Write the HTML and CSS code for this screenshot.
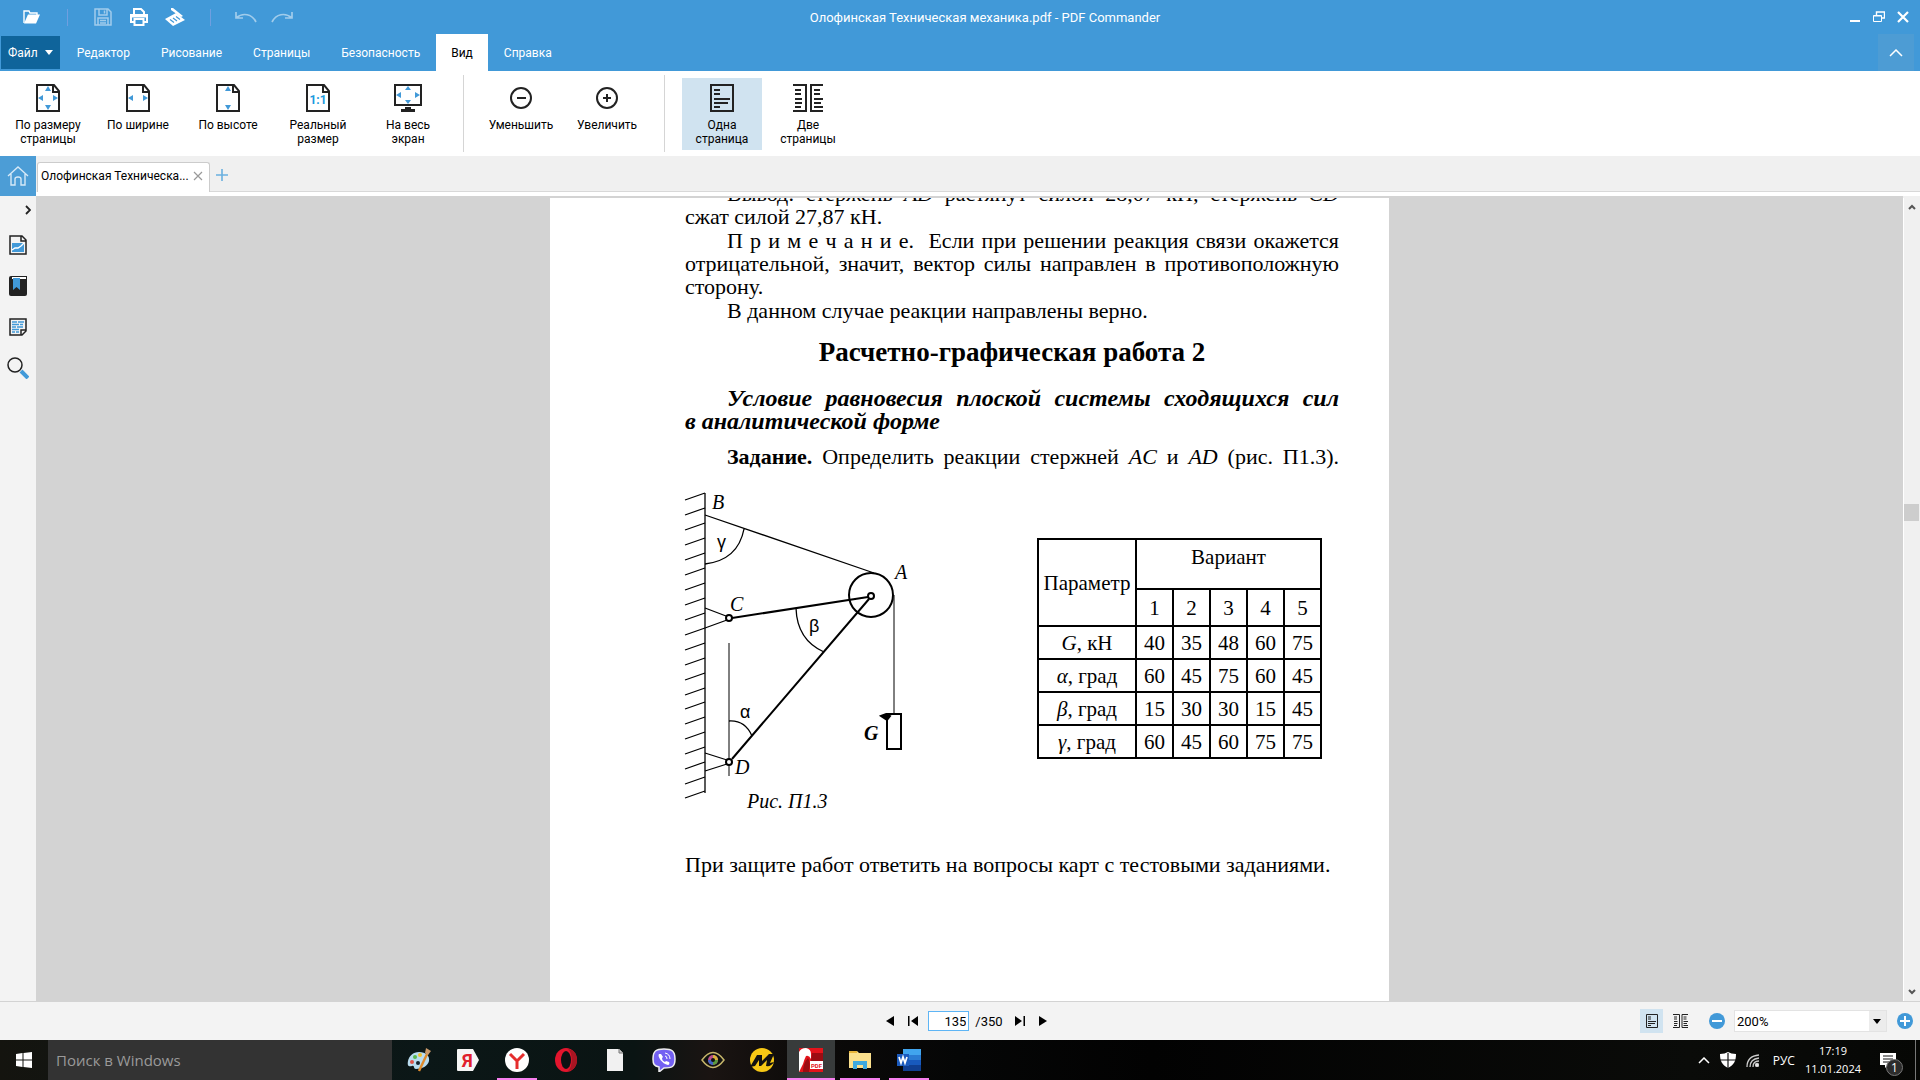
FILE: index.html
```html
<!DOCTYPE html>
<html lang="ru">
<head>
  <meta charset="UTF-8" />
  <meta name="viewport" content="width=device-width, initial-scale=1.0"/>
  <title>Олофинская Техническая механика.pdf - PDF Commander</title>
  <link rel="stylesheet" href="styles.css">
</head>
<body>
  <header class="titlebar">
    <div class="quick">
      <button class="quick-btn" aria-label="Открыть"><svg width="18" height="16" viewBox="0 0 18 16"><path d="M1 14V2h5l1 2h7v2" fill="none" stroke="#fff" stroke-width="1.4"/><path d="M1 14.500L5 5.500H17L13 14.500Z" fill="#fff"/></svg></button>
      <span class="quick-sep"></span>
      <button class="quick-btn faded" aria-label="Сохранить"><svg width="18" height="18" viewBox="0 0 18 18" fill="none" stroke="#fff" stroke-width="1.500"><path d="M1 1h13l3 3v13H1z"/><path d="M5 1v6h8V1M10.500 2.500v3M4 17v-7h10v7M6 12.500h6M6 15h6"/></svg></button>
      <button class="quick-btn" aria-label="Печать"><svg width="18" height="18" viewBox="0 0 18 18" fill="none" stroke="#fff" stroke-width="2"><path d="M4 7V1h7l3 3v3"/><path d="M4 14H1V7h16v7h-3"/><path d="M4.500 11h9v6h-9z"/><path d="M1 8.500h16"/></svg></button>
      <button class="quick-btn" aria-label="Сканировать"><svg width="20" height="18" viewBox="0 0 20 18"><path d="M6 0L8 0L18 8L16 9L6 2Z" fill="#fff"/><path d="M0 11L11 5L20 12L8 18Z" fill="#fff"/><path d="M5 11.500l4 3M8 10l4 3M11 8.500l4 3" stroke="#4199d8" stroke-width="1.200"/></svg></button>
      <span class="quick-sep"></span>
      <button class="quick-btn wide faded" aria-label="Отменить"><svg width="22" height="12" viewBox="0 0 22 12" fill="none" stroke="#fff" stroke-width="1.700"><path d="M1 1v6h7M1 7C8 1 17 3 21 11"/></svg></button>
      <button class="quick-btn wide faded" aria-label="Повторить"><svg width="22" height="12" viewBox="0 0 22 12" fill="none" stroke="#fff" stroke-width="1.700"><path d="M21 1v6h-7M21 7C14 1 5 3 1 11"/></svg></button>
    </div>
    <div class="title">Олофинская Техническая механика.pdf - PDF Commander</div>
    <div class="window-btns">
      <button aria-label="Свернуть"><svg width="12" height="12" viewBox="0 0 12 12"><path d="M1 10h10" stroke="#fff" stroke-width="2"/></svg></button>
      <button aria-label="Восстановить"><svg width="12" height="12" viewBox="0 0 12 12" fill="none" stroke="#fff"><path d="M3.500 4V1h8v6H9" stroke-width="1.400"/><path d="M.500 4.500h8v6h-8zM.500 5h8"/></svg></button>
      <button aria-label="Закрыть"><svg width="12" height="12" viewBox="0 0 12 12"><path d="M1 1l10 10M11 1L1 11" stroke="#fff" stroke-width="2.200"/></svg></button>
    </div>
  </header>

  <nav class="menu">
    <button class="file">Файл <svg width="8" height="5" viewBox="0 0 8 5"><path d="M0 0h8L4 5z" fill="#fff"/></svg></button>
    <button>Редактор</button>
    <button>Рисование</button>
    <button>Страницы</button>
    <button>Безопасность</button>
    <button class="active">Вид</button>
    <button>Справка</button>
    <button class="collapse" aria-label="Свернуть ленту"><svg width="14" height="8" viewBox="0 0 14 8"><path d="M1 7l6-6 6 6" fill="none" stroke="#fff" stroke-width="1.500"/></svg></button>
  </nav>

  <div class="ribbon">
    <div class="group zoom-modes">
      <button>
        <svg width="24" height="28" viewBox="0 0 24 28"><path d="M1 1h17l5 6v20H1zM17 1v7h6" class="ink"/><path d="M12 2l3 5H9zM12 26l3-5H9zM2 14l5-3v6zM22 14l-5-3v6z" class="sky"/></svg>
        По размеру<br>страницы
      </button>
      <button>
        <svg width="24" height="28" viewBox="0 0 24 28"><path d="M1 1h17l5 6v20H1zM17 1v7h6" class="ink"/><path d="M2 14l5-3v6zM22 14l-5-3v6z" class="sky"/></svg>
        По ширине
      </button>
      <button>
        <svg width="24" height="28" viewBox="0 0 24 28"><path d="M1 1h17l5 6v20H1zM17 1v7h6" class="ink"/><path d="M12 2l3 5H9zM12 26l3-5H9z" class="sky"/></svg>
        По высоте
      </button>
      <button>
        <svg width="24" height="28" viewBox="0 0 24 28"><path d="M1 1h17l5 6v20H1zM17 1v7h6" class="ink"/><text x="12" y="20" class="ratio">1:1</text></svg>
        Реальный<br>размер
      </button>
      <button>
        <svg width="28" height="28" viewBox="0 0 28 28"><path d="M1 1h26v20H1z" class="ink"/><path d="M11 23h6v2h4v3H7v-3h4z" fill="#222"/><path d="M14 2l3 4h-6zM14 20l3-4h-6zM2 11l5-3v6zM26 11l-5-3v6z" class="sky"/></svg>
        На весь<br>экран
      </button>
    </div>
    <div class="group">
      <button>
        <svg width="24" height="28" viewBox="0 0 24 28"><circle cx="12" cy="14" r="10" class="ink"/><path d="M8 14h9" class="ink"/></svg>
        Уменьшить
      </button>
      <button>
        <svg width="24" height="28" viewBox="0 0 24 28"><circle cx="12" cy="14" r="10" class="ink"/><path d="M8 14h8M12 10v8" class="ink"/></svg>
        Увеличить
      </button>
    </div>
    <div class="group">
      <button class="selected">
        <svg width="24" height="28" viewBox="0 0 24 28"><path d="M1 1h22v26H1zM4 6h6M4 10h6M4 15h16M4 19h14M4 23h6" class="ink"/></svg>
        Одна<br>страница
      </button>
      <button>
        <svg width="30" height="28" viewBox="0 0 30 28"><path d="M0 1h13v26H0M30 1H18v26h12M2 6h6M2 10h6M2 15h7M2 19h7M2 23h6M21 6h6M21 10h6M21 15h9M21 19h7M21 23h9" class="ink"/></svg>
        Две<br>страницы
      </button>
    </div>
  </div>

  <div class="tabs">
    <button class="home" aria-label="Домой"><svg width="22" height="20" viewBox="0 0 22 20" fill="none" stroke="#d6e9f7" stroke-width="1.400"><path d="M1 10L11 1l10 9M4 8v11h4v-6q0-2 3-2t3 2v6h4V8"/></svg></button>
    <div class="tab">
      <span>Олофинская Техническа...</span>
      <button aria-label="Закрыть вкладку"><svg width="10" height="10" viewBox="0 0 10 10"><path d="M1 1l8 8M9 1L1 9" stroke="#999" stroke-width="1.200"/></svg></button>
    </div>
    <button class="add" aria-label="Новая вкладка"><svg width="12" height="12" viewBox="0 0 12 12"><path d="M0 6h12M6 0v12" stroke="#6ab0df" stroke-width="1.600"/></svg></button>
  </div>

  <div class="workspace">
    <aside class="sidebar">
      <button class="expand" aria-label="Развернуть панель"><svg width="6" height="10" viewBox="0 0 6 10"><path d="M1 1l4 4-4 4" fill="none" stroke="#222" stroke-width="1.800"/></svg></button>
      <button aria-label="Эскизы"><svg width="18" height="20" viewBox="0 0 18 20"><path d="M1 1h12l4 4v14H1zM12 1v5h5" class="thin"/><path d="M3 8h12v9H3z" class="sky"/><path d="M3 15l3-2 3 0 3-2 3-3" fill="none" stroke="#fff" stroke-width="1.400"/></svg></button>
      <button aria-label="Закладки"><svg width="18" height="20" viewBox="0 0 18 20"><path d="M0 2q0-2 2-2h16v18q0 2-2 2H2q-2 0-2-2z" fill="#222"/><path d="M3 1h14v2H3z" fill="#fff"/><path d="M4 2h7v12l-3.500-3L4 14z" class="sky"/></svg></button>
      <button aria-label="Комментарии"><svg width="18" height="18" viewBox="0 0 18 18"><path d="M1 1h16v12l-4 4H1zM17 12h-5v5" class="thin"/><path d="M3 4h5M9 4h6M3 6.500h7M11 6.500h3M3 9h4M8 9h6M3 11.500h7M3 14h3M7 14h3" fill="none" stroke="#4199d8" stroke-width="1.300"/></svg></button>
      <button aria-label="Поиск"><svg width="22" height="22" viewBox="0 0 22 22"><circle cx="8" cy="8" r="7" class="thin"/><path d="M14 14l7 7" stroke="#4199d8" stroke-width="4"/></svg></button>
    </aside>

    <main class="viewer">
      <article class="page">
        <p class="indent">
          <span class="line">Вывод: стержень <i>AD</i> растянут силой 28,07 кН; стержень <i>CD</i></span>
          сжат силой 27,87 кН.
        </p>
        <p class="indent">
          <span class="line">П р и м е ч а н и е.&nbsp; Если при решении реакция связи окажется</span>
          <span class="line">отрицательной, значит, вектор силы направлен в противоположную</span>
          сторону.
        </p>
        <p class="indent">В данном случае реакции направлены верно.</p>
        <h1>Расчетно-графическая работа 2</h1>
        <h2 class="indent">
          <span class="line">Условие равновесия плоской системы сходящихся сил</span>
          в аналитической форме
        </h2>
        <p class="indent"><span class="line"><b>Задание.</b> Определить реакции стержней <i>AC</i> и <i>AD</i> (рис. П1.3).</span></p>

        <div class="task">
          <figure>
            <svg class="scheme" width="230" height="300" viewBox="16 10 230 300">
              <g stroke-width="1.300">
                <path d="M36 13V313"/>
                <path d="M36 13l-20 7M36 28l-20 7M36 43l-20 7M36 58l-20 7M36 73l-20 7M36 88l-20 7M36 103l-20 7M36 118l-20 7M36 133l-20 7M36 148l-20 7M36 163l-20 7M36 178l-20 7M36 193l-20 7M36 208l-20 7M36 222l-20 7M36 237l-20 7M36 252l-20 7M36 267l-20 7M36 282l-20 7M36 297l-20 7M36 311l-20 7"/>
                <path d="M36 35L205 93M75 49Q69 80 36 84M127 128Q128 160 155 172M60 241Q76 240 83 256"/>
                <path d="M36 128l21 8M36 148l22-8M36 273l22 7M36 291l22-7"/>
                <path d="M60 163V296M225 115V234" stroke-width="1"/>
              </g>
              <path d="M63 138L199 117M63 279L200 119"/>
              <circle cx="202" cy="115" r="22"/>
              <circle cx="202" cy="116" r="3" fill="#fff"/>
              <circle cx="60" cy="138" r="3" fill="#fff"/>
              <circle cx="60" cy="282" r="3" fill="#fff"/>
              <path d="M218 234h14v35h-14z"/>
              <path d="M212 236l5-2 4 2-3 4z" fill="#000"/>
              <g class="labels">
                <text x="43" y="29">B</text>
                <text x="226" y="99">A</text>
                <text x="61" y="131">C</text>
                <text x="66" y="294">D</text>
                <text x="195" y="260" font-weight="bold">G</text>
                <text x="48" y="68" class="greek">γ</text>
                <text x="140" y="152" class="greek">β</text>
                <text x="71" y="238" class="greek">α</text>
              </g>
            </svg>
            <figcaption>Рис. П1.3</figcaption>
          </figure>
          <table class="variants">
            <tr class="top"><th rowspan="2" class="param">Параметр</th><th colspan="5">Вариант</th></tr>
            <tr class="nums"><th>1</th><th>2</th><th>3</th><th>4</th><th>5</th></tr>
            <tr><th><i>G</i>, кН</th><td>40</td><td>35</td><td>48</td><td>60</td><td>75</td></tr>
            <tr><th><i>α</i>, град</th><td>60</td><td>45</td><td>75</td><td>60</td><td>45</td></tr>
            <tr><th><i>β</i>, град</th><td>15</td><td>30</td><td>30</td><td>15</td><td>45</td></tr>
            <tr><th><i>γ</i>, град</th><td>60</td><td>45</td><td>60</td><td>75</td><td>75</td></tr>
          </table>
        </div>

        <p class="closing">При защите работ ответить на вопросы карт с тестовыми заданиями.</p>
      </article>
    </main>

    <div class="scroll">
      <button aria-label="Вверх"><svg width="8" height="6" viewBox="0 0 8 6"><path d="M1 5l3-3 3 3" fill="none" stroke="#555" stroke-width="2"/></svg></button>
      <span class="before"></span>
      <span class="thumb"></span>
      <span class="after"></span>
      <button aria-label="Вниз"><svg width="8" height="6" viewBox="0 0 8 6"><path d="M1 1l3 3 3-3" fill="none" stroke="#555" stroke-width="2"/></svg></button>
    </div>
  </div>

  <footer class="status">
    <div class="pager">
      <button aria-label="Предыдущая страница"><svg width="8" height="10" viewBox="0 0 8 10"><path d="M8 0v10L0 5z"/></svg></button>
      <button aria-label="Первая страница"><svg width="10" height="10" viewBox="0 0 10 10"><path d="M0 0h1.500v10H0zM10 0v10L3 5z"/></svg></button>
      <input type="text" id="pageNum" value="135" aria-label="Номер страницы">
      <label for="pageNum">/350</label>
      <button aria-label="Последняя страница"><svg width="10" height="10" viewBox="0 0 10 10"><path d="M8.500 0H10v10H8.500zM0 0v10l7-5z"/></svg></button>
      <button aria-label="Следующая страница"><svg width="8" height="10" viewBox="0 0 8 10"><path d="M0 0v10l8-5z"/></svg></button>
    </div>
    <div class="zoom">
      <button class="selected" aria-label="Одна страница"><svg width="12" height="14" viewBox="0 0 24 28"><path d="M1 1h22v26H1zM4 6h6M4 10h6M4 15h16M4 19h14M4 23h6" class="ink"/></svg></button>
      <button aria-label="Две страницы"><svg width="15" height="14" viewBox="0 0 30 28"><path d="M0 1h13v26H0M30 1H18v26h12M2 6h6M2 10h6M2 15h7M2 19h7M2 23h6M21 6h6M21 10h6M21 15h9M21 19h7M21 23h9" class="ink"/></svg></button>
      <button class="minus" aria-label="Уменьшить"><svg width="16" height="16" viewBox="0 0 16 16"><circle cx="8" cy="8" r="8" class="sky"/><path d="M3 8h10" stroke="#fff" stroke-width="2"/></svg></button>
      <div class="scale">
        <select aria-label="Масштаб"><option>200%</option><option>100%</option></select>
        <svg width="8" height="5" viewBox="0 0 8 5"><path d="M0 0h8L4 5z"/></svg>
      </div>
      <button aria-label="Увеличить"><svg width="16" height="16" viewBox="0 0 16 16"><circle cx="8" cy="8" r="8" class="sky"/><path d="M3 8h10M8 3v10" stroke="#fff" stroke-width="2"/></svg></button>
    </div>
  </footer>

  <div class="taskbar">
    <button class="start" aria-label="Пуск"><svg width="16" height="16" viewBox="0 0 16 16" fill="#fff"><path d="M0 2l6.500-1v6.500H0zM7.500 1L16 0v7.500H7.500zM0 8.500h6.500V15L0 14zM7.500 8.500H16V16l-8.500-1z"/></svg></button>
    <input class="search" type="text" placeholder="Поиск в Windows" aria-label="Поиск в Windows">
    <div class="apps">
      <button aria-label="Paint"><svg width="24" height="24" viewBox="0 0 24 24"><path d="M12 4c7 0 11 4 10 9s-7 8-13 8c-3 0-1-4-4-3s-5 0-4-5 5-9 11-9z" fill="#b9dcef"/><circle cx="5" cy="14" r="2" fill="#e0544a"/><circle cx="8" cy="9" r="2" fill="#58b84c"/><circle cx="13" cy="7" r="2" fill="#f2c12e"/><circle cx="11" cy="15" r="2" fill="#15232c"/><path d="M21 4L12 23" stroke="#e08b2c" stroke-width="2.400"/><path d="M19 0l5 3-3 4-3-2z" fill="#c99a6b"/></svg></button>
      <button aria-label="Яндекс"><svg width="22" height="22" viewBox="0 0 22 22"><path d="M1 0h15l6 11-6 11H1q-1 0-1-1V1q0-1 1-1z" fill="#f5f5f5"/><text x="5" y="18" class="ya">Я</text></svg></button>
      <button class="open" aria-label="Яндекс Браузер"><svg width="24" height="24" viewBox="0 0 24 24"><circle cx="12" cy="12" r="12" fill="#fff"/><path d="M5 6l7 7 7-7M12 12v9" fill="none" stroke="#e52d2d" stroke-width="3"/></svg></button>
      <button aria-label="Opera"><svg width="22" height="24" viewBox="0 0 22 24"><ellipse cx="11" cy="12" rx="11" ry="12" fill="#e3152d"/><path d="M13 1c6 1 9 5 9 11s-3 10-9 11c5-4 5-18 0-22z" fill="#a81522"/><ellipse cx="11" cy="12" rx="5" ry="9" fill="#0b1213"/></svg></button>
      <button aria-label="Документ"><svg width="16" height="22" viewBox="0 0 16 22"><path d="M0 0h12l4 4v18H0z" fill="#f1f1f1"/><path d="M12 0v4h4" fill="#ccc" stroke="#777"/></svg></button>
      <button aria-label="Viber"><svg width="24" height="24" viewBox="0 0 24 24"><path d="M12 1c8 0 11 2 11 10s-3 9-11 9l-5 4v-5c-5-1-6-3-6-8C1 3 4 1 12 1z" fill="#7360f2" stroke="#eee" stroke-width="1.500"/><path d="M7 6c-2 2 3 10 9 11 1 0 2-2 1-3l-3-1-1 1c-2-1-3-2-3-4l1-1-2-3z" fill="#fff"/><path d="M13 5q5 1 5 6M13 8q2 0 2 3" fill="none" stroke="#fff"/></svg></button>
      <button aria-label="Просмотр"><svg width="24" height="18" viewBox="0 0 24 18"><path d="M1 9q11-15 22 0q-11 15-22 0z" fill="#111" stroke="#c5b56a" stroke-width="1.500"/><circle cx="12" cy="9" r="5" fill="#b84f8a"/><path d="M12 9V4a5 5 0 0 1 5 5z" fill="#d9b23a"/><path d="M12 9h5a5 5 0 0 1-5 5z" fill="#5a9a3f"/><path d="M12 9v5a5 5 0 0 1-5-5z" fill="#3f63c4"/><circle cx="12" cy="9" r="2" fill="#111"/></svg></button>
      <button aria-label="M"><svg width="24" height="24" viewBox="0 0 24 24"><circle cx="12" cy="12" r="12" fill="#f7c815"/><path d="M0 19L7 7h5v6l7-7h5l-4 9 4-1q-3 5-8 4l1-6-6 6H9v-6l-4 6z" fill="#111"/></svg></button>
      <button class="open current" aria-label="PDF Commander"><svg width="24" height="24" viewBox="0 0 24 24"><path d="M0 0h24v24H0z" fill="#e3131b"/><path d="M13 5h11v8H12z" fill="#9c0c12"/><path d="M0 24V4q2-4 7-4 5 1 5 6v5q-2-4-5-3-2 4-3 8-2 4-4 8z" fill="#fff"/><path d="M4 24q0-9 5-14 3 4 1 14z" fill="#9c0c12"/><rect x="11" y="13" width="13" height="8" fill="#fff"/><text x="12" y="20" class="pdf">PDF</text></svg></button>
      <button class="open" aria-label="Проводник"><svg width="22" height="20" viewBox="0 0 22 20"><path d="M0 1h8l2 2h12v15H0z" fill="#fbe08d"/><path d="M0 1h8v2H0z" fill="#e8b53a"/><path d="M4 19v-8h14v8h-4v-4H8v4z" fill="#3da9e0"/></svg></button>
      <button class="open" aria-label="Word"><svg width="24" height="22" viewBox="0 0 24 22"><path d="M6 0h18v6H6z" fill="#41a5ee"/><path d="M6 6h18v5H6z" fill="#2b7cd3"/><path d="M6 11h18v5H6z" fill="#185abd"/><path d="M6 16h18v6H6z" fill="#103f91"/><path d="M0 5h12v12H0z" fill="#1b5abc"/><path d="M2 8l2 6 2-6 2 6 2-6" fill="none" stroke="#fff" stroke-width="1.700"/></svg></button>
    </div>
    <div class="tray">
      <button aria-label="Скрытые значки"><svg width="12" height="7" viewBox="0 0 12 7"><path d="M1 6l5-5 5 5" fill="none" stroke="#fff" stroke-width="1.500"/></svg></button>
      <button aria-label="Защита"><svg width="16" height="16" viewBox="0 0 16 16"><path d="M8 0q3 2 8 2c0 7-2 11-8 14C2 13 0 9 0 2q5 0 8-2z" fill="#fff"/><path d="M8 1v15M0 8h16" stroke="#111" stroke-width="1.200"/></svg></button>
      <button aria-label="Сеть"><svg width="13" height="13" viewBox="0 0 13 13" fill="none" stroke="#ccc" stroke-width="1.300"><path d="M1 13Q1 2 13 1M4 13Q4 5 13 4M7 13q0-6 6-6"/><circle cx="11" cy="11" r="1.500" fill="#fff"/></svg></button>
      <span class="lang">РУС</span>
      <time class="clock">17:19<br>11.01.2024</time>
      <button class="notes" aria-label="Уведомления"><svg width="16" height="15" viewBox="0 0 16 15"><path d="M0 0h16v12H8l-3 3v-3H0z" fill="#fff"/><path d="M3 3h10M3 6h10M3 9h6" stroke="#111"/></svg><span class="badge">1</span></button>
    </div>
  </div>
</body>
</html>
```
FILE: styles.css
```css
* { box-sizing: border-box; }
body {
  margin: 0;
  height: 100vh;
  display: flex;
  flex-direction: column;
  overflow: hidden;
  font-family: Roboto, sans-serif;
  font-size: 12px;
  color: #000;
  background: #f0f0f0;
}

button {
  display: flex;
  align-items: center;
  justify-content: center;
  padding: 0;
  border: none;
  background: none;
  font: inherit;
  color: inherit;
}

svg { display: block; flex: none; }
.ink { fill: none; stroke: #222; stroke-width: 2; }
.thin { fill: none; stroke: #222; stroke-width: 1.5; }
.sky { fill: #4199d8; }
.ratio {
  fill: #1b9ade;
  font-size: 12px;
  font-weight: bold;
  text-anchor: middle;
}

/* title bar */
.titlebar {
  display: grid;
  grid-template-columns: 300px 1fr 250px;
  align-items: center;
  height: 34px;
  background: #4199d8;
  color: #fff;
}
.title {
  font-size: 13px;
  text-align: center;
}
.quick {
  display: flex;
  align-items: center;
  padding-left: 14px;
}
.quick-btn { width: 36px; height: 34px; }
.quick-btn.faded { opacity: 0.5; }
.quick-sep {
  width: 1px;
  height: 17px;
  margin: 0 17px;
  background: #6f9fe0;
}
.window-btns {
  display: flex;
  justify-content: flex-end;
  gap: 12px;
  padding-right: 11px;
}

/* menu */
.menu {
  display: flex;
  gap: 1px;
  height: 37px;
  background: #4199d8;
  color: #fff;
}
.menu button { padding: 0 15px; }
.menu .file {
  gap: 7px;
  margin: 2px 1px;
  padding: 0 7px;
  background: #0f649b;
}
.menu .active { background: #fff; color: #000; }
.menu .collapse {
  margin-left: auto;
  margin-right: 6px;
  padding: 0 11px;
  background: #4d9cd4;
}

/* ribbon */
.ribbon {
  display: flex;
  height: 85px;
  padding: 4px 0;
  background: #fff;
}
.group {
  display: flex;
  gap: 6px;
  padding: 3px 17px;
  border-right: 1px solid #d5d5d5;
}
.group:last-child { border-right: none; }
.zoom-modes {
  gap: 10px;
  padding: 3px 15px 3px 8px;
}
.group button {
  flex-direction: column;
  justify-content: flex-start;
  width: 80px;
  height: 72px;
  padding-top: 6px;
  line-height: 14px;
}
.group button svg { margin-bottom: 6px; }
.selected { background: #d0e3f0; }

/* document tabs */
.tabs {
  display: flex;
  align-items: flex-end;
  height: 40px;
  border-bottom: 4px solid #fff;
  background: #f0f0f0;
}
.home {
  align-self: flex-start;
  width: 36px;
  height: 40px;
  margin-bottom: -4px;
  background: #4c9dd6;
}
.tab {
  display: flex;
  align-items: center;
  justify-content: space-between;
  width: 173px;
  height: 30px;
  margin-left: 1px;
  padding: 0 6px 4px 3px;
  border: 1px solid #ccc;
  border-bottom: none;
  border-radius: 3px 3px 0 0;
  background: #fff;
}
.add {
  flex: 1;
  height: 30px;
  justify-content: flex-start;
  padding: 0 6px 4px;
  border-bottom: 1px solid #d8d8d8;
}

/* work area */
.workspace {
  flex: 1;
  display: flex;
  min-height: 0;
}
.sidebar {
  display: flex;
  flex-direction: column;
  width: 36px;
  background: #f3f3f3;
}
.sidebar button { height: 41px; }
.sidebar .expand {
  height: 28px;
  justify-content: flex-end;
  padding-right: 5px;
}
.viewer {
  flex: 1;
  display: flex;
  justify-content: center;
  align-items: flex-start;
  padding-top: 2px;
  overflow: hidden;
  background: #d3d3d3;
}
.scroll {
  display: flex;
  flex-direction: column;
  width: 17px;
  margin-top: 2px;
  border-left: 1px solid #fff;
  background: #f0f0f0;
}
.scroll button { height: 18px; }
.before { flex: 135; }
.after { flex: 217; }
.thumb {
  height: 17px;
  margin-right: 1px;
  background: #cdcdcd;
}

/* scanned page */
.page {
  width: 839px;
  min-height: 100%;
  padding: 0 50px 0 135px;
  overflow: hidden;
  background: #fff;
  font-family: "Liberation Serif", serif;
  font-size: 22px;
  line-height: 23px;
}
.page p { margin: 0 0 1px; }
.page p:first-child { margin-top: -16px; }
.page .indent { text-indent: 42px; }
.line { display: block; text-align-last: justify; }
.page .indent .line + .line { text-indent: 0; }
.page h1 {
  margin: 18px 0 22px;
  font-size: 27px;
  line-height: 25px;
  text-align: center;
}
.page h2 {
  margin: 0 0 12px;
  font-size: 24px;
  font-style: italic;
}

.task {
  display: flex;
  justify-content: space-between;
  align-items: flex-start;
  padding: 21px 17px 0 0;
}
.task figure { margin: 0; }
.scheme {
  overflow: visible;
  fill: none;
  stroke: #000;
  stroke-width: 2;
}
.labels {
  fill: #000;
  stroke: none;
  font-size: 20px;
  font-style: italic;
}
.greek {
  font-family: "Liberation Sans", sans-serif;
  font-size: 18px;
  font-style: normal;
}
figcaption {
  padding-left: 62px;
  font-size: 20px;
  font-style: italic;
}
.variants {
  margin-top: 48px;
  border-collapse: collapse;
  font-size: 21px;
}
.variants th, .variants td {
  width: 37px;
  height: 33px;
  padding: 1px 0 0;
  border: 2px solid #000;
  font-weight: normal;
  text-align: center;
}
.variants .param { width: 98px; }
.variants .top th { height: 50px; }
.variants .top th + th { padding-bottom: 14px; }
.variants .nums th { height: 37px; }
.page .closing {
  margin-top: 28px;
  padding-top: 12px;
}

/* status bar */
.status {
  display: grid;
  grid-template-columns: 1fr auto 1fr;
  align-items: center;
  height: 39px;
  padding-left: 13px;
  border-top: 1px solid #d3d3d3;
  background: #f3f3f3;
}
.pager {
  grid-column: 2;
  display: flex;
  align-items: center;
}
.pager button, .zoom button { width: 23px; height: 24px; }
.pager input {
  width: 41px;
  height: 20px;
  margin: 0 6px 0 4px;
  padding: 0 2px;
  border: 1px solid #5eb5f5;
  background: #fff;
  font: 13px Roboto, sans-serif;
  text-align: right;
}
.pager label {
  margin-right: 6px;
  font-size: 13px;
}
.zoom {
  display: flex;
  align-items: center;
  justify-content: flex-end;
  gap: 6px;
  padding-right: 4px;
}
.zoom .minus { margin-left: 7px; }
.scale {
  display: flex;
  align-items: center;
  width: 153px;
  height: 22px;
  padding-right: 5px;
  border: 1px solid #e3e3e3;
  background: linear-gradient(to left, #ececec 17px, #fff 17px);
}
.scale select {
  flex: 1;
  padding: 0 2px;
  border: none;
  appearance: none;
  background: none;
  font: 13px Roboto, sans-serif;
}

/* taskbar */
.taskbar {
  display: flex;
  height: 40px;
  background: linear-gradient(to right, #14140f, #0b1717 22%, #0a1413 33%, #1a1412 37%, #0c0a09 42%, #050606 50%, #020202 60%, #0a0b09 88%, #060705);
  font-family: "Open Sans", sans-serif;
  color: #fff;
}
.start { width: 48px; }
.search {
  width: 344px;
  padding: 0 8px;
  border: none;
  background: #333;
  font: 15px "Open Sans", sans-serif;
}
.search::placeholder { color: #9a9a9a; }
.apps {
  display: flex;
  gap: 1px;
  padding-left: 3px;
}
.apps button { width: 48px; }
.apps .open {
  background: linear-gradient(#f77fee, #f77fee) center bottom / 40px 2px no-repeat;
}
.apps .current {
  background: linear-gradient(to top, #f77fee 2px, #383b3b 2px);
}
.ya { fill: #e0202c; font: bold 18px Roboto, sans-serif; }
.pdf { fill: #e3131b; font: bold 6px Roboto, sans-serif; }
.tray {
  display: flex;
  align-items: center;
  gap: 10px;
  margin-left: auto;
  margin-right: 4px;
  border-right: 1px solid #777;
}
.lang {
  margin-left: 4px;
  font-size: 12px;
}
.clock {
  font-size: 11px;
  line-height: 18px;
  text-align: center;
}
.notes {
  position: relative;
  width: 34px;
  height: 40px;
  margin-right: 10px;
}
.badge {
  position: absolute;
  right: 2px;
  bottom: 4px;
  width: 17px;
  height: 17px;
  border: 1px solid #777;
  border-radius: 50%;
  background: #2c2c2c;
  font-size: 12px;
  line-height: 15px;
}
```
